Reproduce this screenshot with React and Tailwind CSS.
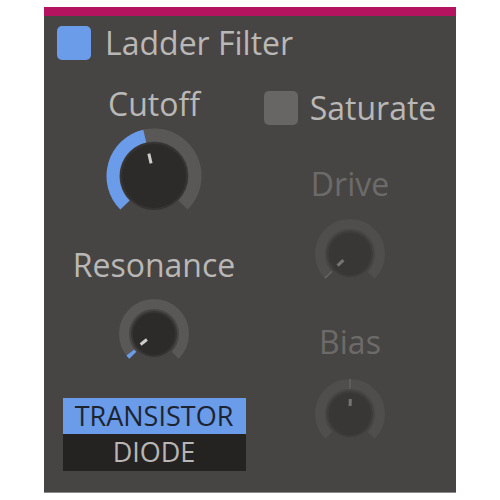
import React from 'react';

const font = { fontFamily: '"Open Sans", "Noto Sans", sans-serif' };

function polar(cx, cy, r, deg) {
  const a = ((deg - 90) * Math.PI) / 180;
  return [cx + r * Math.cos(a), cy + r * Math.sin(a)];
}

function arc(cx, cy, r, from, to) {
  const [x1, y1] = polar(cx, cy, r, from);
  const [x2, y2] = polar(cx, cy, r, to);
  const large = to - from > 180 ? 1 : 0;
  return `M ${x1} ${y1} A ${r} ${r} 0 ${large} 1 ${x2} ${y2}`;
}

function Knob({ size, ring, ringW, body, from = -135, value, tick, arcColor, ringColor, bodyColor, edgeColor, tickColor }) {
  const c = size / 2;
  const [t1x, t1y] = polar(c, c, tick[0], value);
  const [t2x, t2y] = polar(c, c, tick[1], value);
  const a0 = Math.min(from, value);
  const a1 = Math.max(from, value);
  return (
    <svg width={size} height={size} viewBox={`0 0 ${size} ${size}`}>
      <path d={arc(c, c, ring, -135, 135)} fill="none" stroke={ringColor} strokeWidth={ringW} />
      {a1 - a0 > 0.5 && <path d={arc(c, c, ring, a0, a1)} fill="none" stroke={arcColor} strokeWidth={ringW} />}
      <circle cx={c} cy={c} r={body + 2} fill={edgeColor} />
      <circle cx={c} cy={c} r={body} fill={bodyColor} />
      <line x1={t1x} y1={t1y} x2={t2x} y2={t2y} stroke={tickColor} strokeWidth="3" />
    </svg>
  );
}

function Label({ children, dim }) {
  return (
    <div className={`text-[32px] leading-[32px] whitespace-nowrap ${dim ? 'text-[#6d6b69]' : 'text-[#bab8b6]'}`}>
      {children}
    </div>
  );
}

export default function App() {
  const on = { arcColor: '#6a9ce9', ringColor: '#5a5857', bodyColor: '#2c2b2a', edgeColor: '#363433', tickColor: '#cfcdcb' };
  const off = { arcColor: '#6c6a69', ringColor: '#504e4d', bodyColor: '#393736', edgeColor: '#3e3c3b', tickColor: '#767473' };

  return (
    <div className="w-[500px] h-[500px] bg-white pl-[44px] pt-[7px]" style={font}>
      <div className="w-[412px] h-[486px] bg-[#474543] flex flex-col border-b border-[#8a8988]">
        <div className="h-[9px] bg-[#b3135f]" />

        {/* Header */}
        <div className="flex items-center h-[34px] mt-[10px] pl-[13px]">
          <div className="w-[34px] h-[34px] rounded-[5px] bg-[#6a9ce9]" />
          <div className="ml-[14px]">
            <Label>Ladder Filter</Label>
          </div>
        </div>

        <div className="flex">
          {/* Left column */}
          <div className="w-[220px] flex flex-col items-center">
            <div className="mt-[28px]">
              <Label>Cutoff</Label>
            </div>
            <div className="mt-[6px]">
              <Knob size={100} ring={41} ringW={13} body={32} value={-13} tick={[13, 23]} {...on} />
            </div>
            <div className="mt-[23px]">
              <Label>Resonance</Label>
            </div>
            <div className="mt-[13px]">
              <Knob size={80} ring={30} ringW={10} body={21} value={-128} tick={[9, 17]} {...on} />
            </div>
            <div className="mt-[24px] w-[183px] flex flex-col text-[27px] leading-[36px] text-center">
              <div className="h-[36px] bg-[#6a9ce9] text-[#1d2431]">TRANSISTOR</div>
              <div className="h-[37px] bg-[#252322] text-[#b8b6b4]">DIODE</div>
            </div>
          </div>

          {/* Right column */}
          <div className="w-[172px] flex flex-col items-center">
            <div className="mt-[31px] flex items-center h-[34px]">
              <div className="w-[34px] h-[34px] rounded-[5px] bg-[#686665]" />
              <div className="ml-[12px]">
                <Label>Saturate</Label>
              </div>
            </div>
            <div className="mt-[43px]">
              <Label dim>Drive</Label>
            </div>
            <div className="mt-[14px]">
              <Knob size={80} ring={30} ringW={10} body={21} value={-133} tick={[9, 17]} {...off} />
            </div>
            <div className="mt-[32px]">
              <Label dim>Bias</Label>
            </div>
            <div className="mt-[16px]">
              <Knob size={80} ring={30} ringW={10} body={21} from={-1} value={1} tick={[8, 15]} {...off} />
            </div>
          </div>
        </div>
      </div>
    </div>
  );
}
